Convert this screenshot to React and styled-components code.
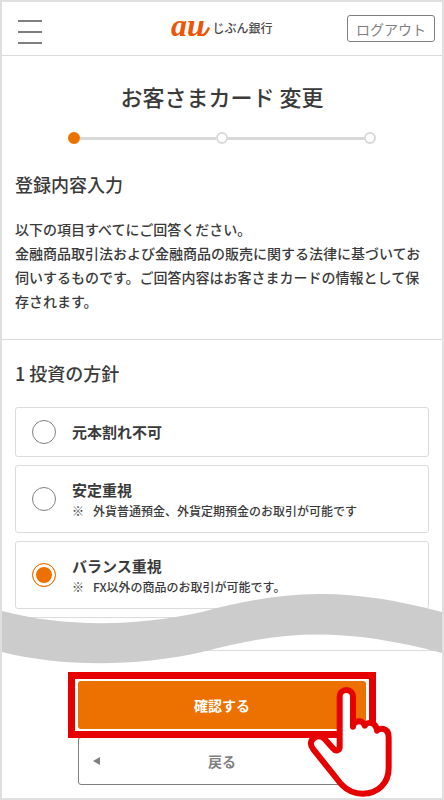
import React, { useState } from "react";
import styled, { createGlobalStyle } from "styled-components";

const ORANGE = "#ed7100";
const INK = "#3a3a3a";
const GREY = "#7f7f7f";
const LINE = "#dbdbdb";
const RED = "#e60000";

const GlobalStyle = createGlobalStyle`
  *, *::before, *::after { box-sizing: border-box; }
  body {
    margin: 0;
    background: #fff;
    color: ${INK};
    font-family: "Noto Sans CJK JP", "Noto Sans", sans-serif;
    font-weight: 500;
  }
  h1, h2, h3, p { margin: 0; }
  button, input { font: inherit; }
`;

const Frame = styled.div`
  min-height: 100vh;
  border: 2px solid #dfdfdf;
`;

const Header = styled.header`
  display: grid;
  grid-template-columns: 1fr auto 1fr;
  align-items: center;
  height: 54px;
  padding: 0 7px;
  border-bottom: 1px solid ${LINE};
`;

const MenuButton = styled.button`
  display: flex;
  flex-direction: column;
  justify-content: space-between;
  width: 24px;
  height: 24px;
  margin: 6px 0 0 9px;
  padding: 0;
  border: 0;
  background: none;
`;

const MenuBar = styled.span`
  height: 2px;
  background: ${GREY};
`;

const Logo = styled.a`
  display: flex;
  align-items: center;
  gap: 2px;
  color: #4c4a4a;
  font-size: 12px;
  line-height: 20px;
  text-decoration: none;
`;

const LogoName = styled.span`
  padding-bottom: 2px;
`;

const LogoMark = styled.svg`
  display: block;
  width: 39px;
  height: 46px;
  fill: #eb5505;
  font-family: "Liberation Serif", serif;
  font-size: 32px;
  font-style: italic;
  font-weight: 700;
`;

const LogoutButton = styled.button`
  justify-self: end;
  width: 88px;
  height: 27px;
  padding: 0;
  border: 1px solid ${GREY};
  border-radius: 3px;
  background: #fff;
  color: ${GREY};
  font-size: 14px;
  font-weight: 400;
  line-height: 24px;
`;

const Title = styled.h1`
  padding-top: 24px;
  font-size: 22px;
  font-weight: 500;
  line-height: 32px;
  text-align: center;
`;

const Steps = styled.ol`
  display: flex;
  align-items: center;
  margin: 20px 66px 0;
  padding: 0;
  list-style: none;
`;

const Step = styled.li`
  display: flex;
  align-items: center;
  flex: ${(p) => (p.$first ? "none" : "1")};

  &::before {
    content: "";
    display: ${(p) => (p.$first ? "none" : "block")};
    flex: 1;
    height: 3px;
    background: #d9d9d9;
  }

  &::after {
    content: "";
    width: 12px;
    height: 12px;
    border: 2px solid ${(p) => (p.$first ? ORANGE : "#d9d9d9")};
    border-radius: 50%;
    background: ${(p) => (p.$first ? ORANGE : "#fff")};
  }
`;

const Intro = styled.section`
  padding: 27px 13px 26px;
  border-bottom: 1px solid ${LINE};
`;

const Heading = styled.h2`
  font-size: 18px;
  font-weight: 500;
  line-height: 26px;
`;

const Lead = styled.p`
  margin-top: 20px;
  font-size: 14px;
  line-height: 24px;
`;

const Question = styled.section`
  position: relative;
  padding: 20px 13px 18px;
  border-bottom: 1px solid ${LINE};
`;

const Options = styled.div`
  display: flex;
  flex-direction: column;
  gap: 8px;
  margin-top: 21px;
`;

const Option = styled.label`
  display: flex;
  align-items: center;
  gap: 16px;
  min-height: ${(p) => (p.$tall ? "68px" : "50px")};
  padding: 0 16px;
  border: 1px solid ${LINE};
  border-radius: 3px;
`;

const OptionPeek = styled.div`
  height: 15px;
  border: 1px solid ${LINE};
  border-bottom: 0;
  border-radius: 3px 3px 0 0;
`;

const Radio = styled.input`
  appearance: none;
  flex: none;
  width: 24px;
  height: 24px;
  margin: 0;
  border: 1px solid ${GREY};
  border-radius: 50%;
  background: #fff;

  &:checked {
    border-color: ${ORANGE};
    background: ${ORANGE};
    box-shadow: inset 0 0 0 3px #fff;
  }
`;

const OptionText = styled.span`
  display: flex;
  flex-direction: column;
  padding-top: ${(p) => (p.$tall ? "2px" : "0")};
`;

const OptionName = styled.span`
  font-size: 15px;
  font-weight: 700;
  line-height: 22px;
`;

const OptionNote = styled.span`
  display: flex;
  gap: 9px;
  font-size: 12px;
  line-height: 20px;
`;

const Wave = styled.svg`
  position: absolute;
  left: 0;
  bottom: -14px;
  width: 100%;
  height: 70px;
  fill: #ccc;
`;

const Actions = styled.div`
  display: flex;
  flex-direction: column;
  margin: 0 66px;
  padding: 21px 0 13px;
`;

const Highlight = styled.div`
  position: relative;
  z-index: 1;
  display: flex;
  padding: 2px 3px;
  border: 7px solid ${RED};
  background: #fff;
`;

const ConfirmButton = styled.button`
  flex: 1;
  height: 48px;
  padding: 0;
  border: 0;
  border-radius: 3px;
  background: ${ORANGE};
  color: #fff;
  font-size: 14px;
  font-weight: 700;
`;

const BackButton = styled.button`
  display: grid;
  grid-template-columns: 1fr auto 1fr;
  align-items: center;
  height: 48px;
  margin: -1px 10px 0;
  padding: 0 14px;
  border: 1px solid ${GREY};
  border-radius: 3px;
  background: #fff;
  color: ${GREY};
  font-size: 14px;
  font-weight: 700;
`;

const BackArrow = styled.svg`
  width: 7px;
  height: 8px;
  fill: ${GREY};
`;

const Hand = styled.svg`
  position: absolute;
  right: -26px;
  bottom: -68px;
  width: 90px;
  height: 115px;
  fill: #fff;
  stroke: ${RED};
  stroke-width: 18;
  stroke-linejoin: round;
  pointer-events: none;
`;

const OPTIONS = [
  { id: "principal", name: "元本割れ不可" },
  { id: "stable", name: "安定重視", note: "外貨普通預金、外貨定期預金のお取引が可能です" },
  { id: "balance", name: "バランス重視", note: "FX以外の商品のお取引が可能です。" },
];

export default function App() {
  const [policy, setPolicy] = useState("balance");

  return (
    <>
      <GlobalStyle />
      <Frame>
        <Header>
          <MenuButton type="button" aria-label="メニュー">
            <MenuBar />
            <MenuBar />
            <MenuBar />
          </MenuButton>
          <Logo href="#">
            <LogoMark viewBox="0 0 39 46">
              <text x="0" y="30">au</text>
              <path d="M31 28 C33 28 35 25 37 21 L39 22 C37 27 34 31 31 30 Z" />
            </LogoMark>
            <LogoName>じぶん銀行</LogoName>
          </Logo>
          <LogoutButton type="button">ログアウト</LogoutButton>
        </Header>

        <main>
          <Title>お客さまカード 変更</Title>
          <Steps aria-label="手続きの進捗">
            <Step $first aria-current="step" />
            <Step />
            <Step />
          </Steps>

          <Intro>
            <Heading>登録内容入力</Heading>
            <Lead>
              以下の項目すべてにご回答ください。
              <br />
              金融商品取引法および金融商品の販売に関する法律に基づいてお伺いするものです。ご回答内容はお客さまカードの情報として保存されます。
            </Lead>
          </Intro>

          <Question>
            <Heading id="policy-title">1 投資の方針</Heading>
            <Options role="radiogroup" aria-labelledby="policy-title">
              {OPTIONS.map((o) => (
                <Option key={o.id} $tall={Boolean(o.note)}>
                  <Radio
                    type="radio"
                    name="policy"
                    value={o.id}
                    checked={policy === o.id}
                    onChange={() => setPolicy(o.id)}
                  />
                  <OptionText $tall={Boolean(o.note)}>
                    <OptionName>{o.name}</OptionName>
                    {o.note && (
                      <OptionNote>
                        <span>※</span>
                        <span>{o.note}</span>
                      </OptionNote>
                    )}
                  </OptionText>
                </Option>
              ))}
              <OptionPeek />
            </Options>
            <Wave viewBox="0 0 440 70" preserveAspectRatio="none" aria-hidden="true">
              <path d="M0 17 C60 33 133 33 200 18 C285 -5 345 -7 440 18 V59 C345 34 285 35 200 58 C133 73 60 73 0 58 Z" />
            </Wave>
          </Question>

          <Actions>
            <Highlight>
              <ConfirmButton type="button">確認する</ConfirmButton>
              <Hand viewBox="45 72 270 345" aria-hidden="true">
                <path d="M149 262 V110 A20 20 0 0 1 189 110 V200 C190 180 220 178 224 197 C232 183 258 186 261 212 C266 204 296 200 296 232 V325 C296 370 263 401 218 401 C190 401 170 390 153 372 L70 268 C58 254 62 239 73 234 C84 224 95 228 104 237 L130 266 C137 275 149 271 149 262 Z" />
              </Hand>
            </Highlight>
            <BackButton type="button">
              <BackArrow viewBox="0 0 7 8" aria-hidden="true">
                <path d="M0 4 L7 0 V8 Z" />
              </BackArrow>
              戻る
            </BackButton>
          </Actions>
        </main>
      </Frame>
    </>
  );
}
